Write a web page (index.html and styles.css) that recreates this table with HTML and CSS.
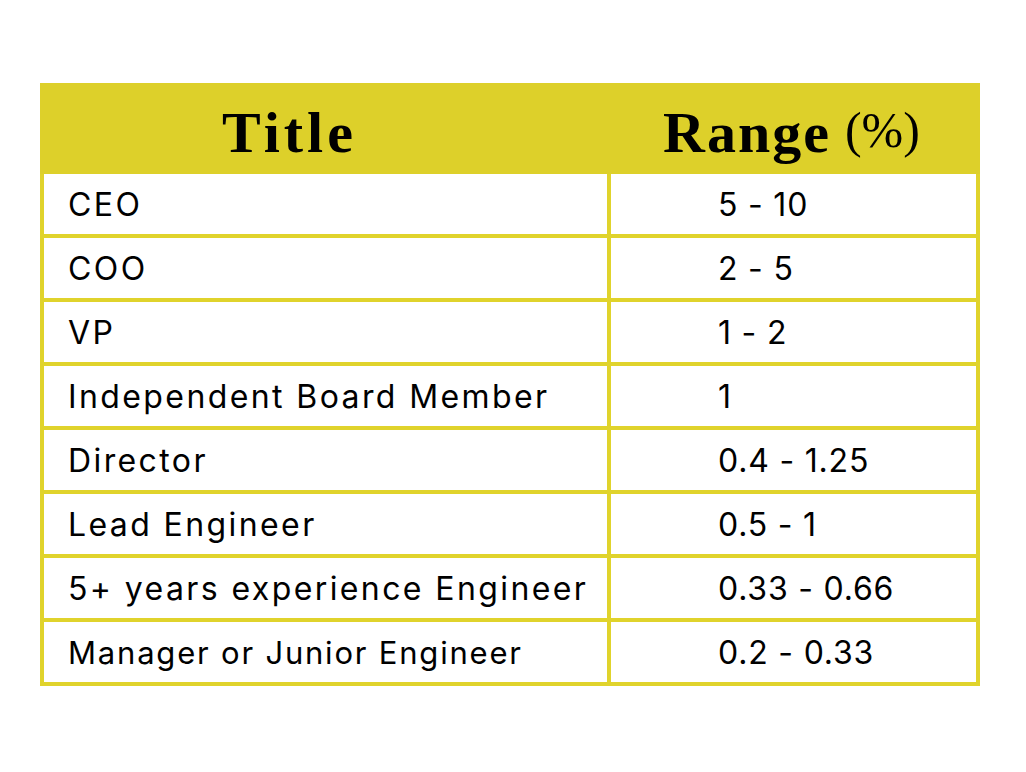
FILE: index.html
```html
<!DOCTYPE html>
<html>
<head>
<meta charset="utf-8">
<link rel="stylesheet" href="styles.css">
</head>
<body>
<div class="table">
  <div class="head">
    <div class="hcell h1">Title</div>
    <div class="hcell h2"><span class="bold">Range</span> <span class="pct">(%)</span></div>
  </div>
  <div class="row"><div class="c1">CEO</div><div class="c2">5 - 10</div></div>
  <div class="row"><div class="c1">COO</div><div class="c2">2 - 5</div></div>
  <div class="row"><div class="c1">VP</div><div class="c2">1 - 2</div></div>
  <div class="row"><div class="c1">Independent Board Member</div><div class="c2">1</div></div>
  <div class="row"><div class="c1">Director</div><div class="c2">0.4 - 1.25</div></div>
  <div class="row"><div class="c1">Lead Engineer</div><div class="c2">0.5 - 1</div></div>
  <div class="row"><div class="c1">5+ years experience Engineer</div><div class="c2">0.33 - 0.66</div></div>
  <div class="row"><div class="c1 narrow">Manager or Junior Engineer</div><div class="c2">0.2 - 0.33</div></div>
</div>
</body>
</html>
```

FILE: styles.css
```css
html, body {
  margin: 0;
  background: #ffffff;
}
body {
  padding: 83px 0 0 40px;
}
.table {
  width: 940px;
}
.head {
  display: flex;
  height: 91px;
  background: #ddd02a;
  font-family: "Liberation Serif", serif;
  color: #000;
}
.hcell {
  display: flex;
  align-items: center;
  padding-top: 8px;
  box-sizing: border-box;
}
.h1 {
  width: 571px;
  padding-left: 182px;
  font-weight: bold;
  font-size: 58px;
  letter-spacing: 4px;
}
.h2 {
  flex: 1;
  padding-left: 52px;
  font-size: 58px;
}
.h2 .bold {
  font-weight: bold;
  letter-spacing: 2px;
}
.h2 .pct {
  font-size: 50px;
  font-family: "Liberation Serif", serif;
  margin-left: 14px;
  position: relative;
  top: -3px;
}
.row {
  display: flex;
  height: 64px;
  border-left: 4px solid #e0d32c;
  border-right: 4px solid #e0d32c;
  border-bottom: 4px solid #e0d32c;
  box-sizing: border-box;
  font-family: "Inter", "Liberation Sans", sans-serif;
  font-size: 32px;
  color: #000;
}
.c1 {
  width: 567px;
  border-right: 4px solid #e0d32c;
  box-sizing: border-box;
  padding-left: 24px;
  display: flex;
  align-items: center;
  letter-spacing: 2.4px;
}
.c1.narrow {
  letter-spacing: 1.8px;
  font-size: 31px;
}
.c2 {
  flex: 1;
  padding-left: 107px;
  display: flex;
  align-items: center;
  letter-spacing: 0.8px;
}
```
